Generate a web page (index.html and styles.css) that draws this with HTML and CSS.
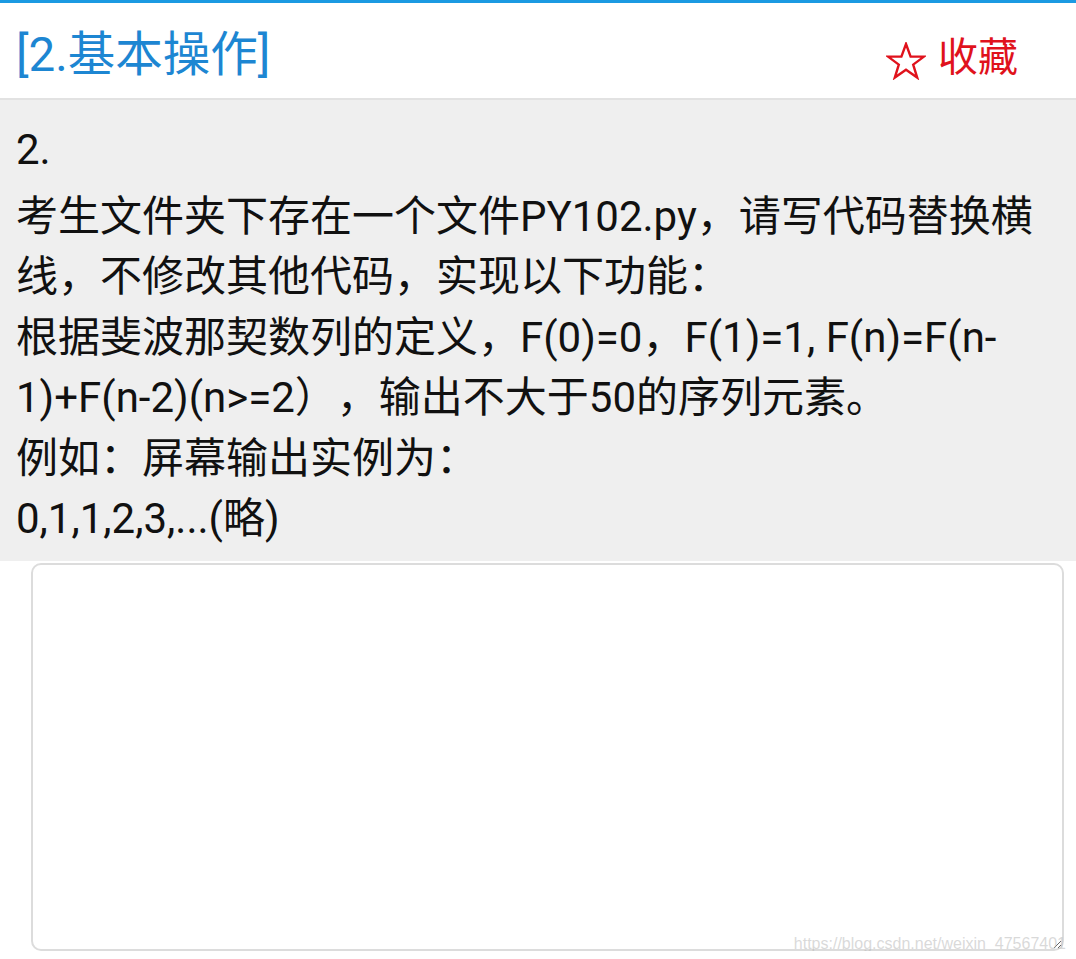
FILE: index.html
```html
<!DOCTYPE html>
<html lang="zh-CN">
<head>
    <meta charset="UTF-8">
    <meta name="viewport" content="width=device-width, initial-scale=1">
    <title>2.基本操作</title>
    <link rel="stylesheet" href="styles.css">
</head>
<body>
<header class="topbar">
    <h1 class="title">[2.基本操作]</h1>
    <span class="fav">
        <svg class="star" viewBox="0 0 40 38" width="40" height="38">
            <polygon points="20,2 24.6,14.6 38,14.6 27.2,22.6 31.2,35.6 20,27.8 8.8,35.6 12.8,22.6 2,14.6 15.4,14.6"
                     fill="none" stroke="#e0121c" stroke-width="2.4" stroke-linejoin="miter"/>
        </svg>
        收藏
    </span>
</header>
<section class="question">
    <div class="num">2.</div>
    <div class="body">
        考生文件夹下存在一个文件PY102.py，请写代码替换横<br>
        线，不修改其他代码，实现以下功能：<br>
        根据斐波那契数列的定义，F(0)=0，F(1)=1, F(n)=F(n-<br>
        1)+F(n-2)(n&gt;=2），输出不大于50的序列元素。<br>
        例如：屏幕输出实例为：<br>
        0,1,1,2,3,...(略)
    </div>
</section>
<div class="answer">
    <textarea class="code"></textarea>
    <span class="mark">https://blog.csdn.net/weixin_47567401</span>
</div>
</body>
</html>
```

FILE: styles.css
```css
* {
    margin: 0;
    padding: 0;
    box-sizing: border-box;
}

body {
    font-family: Roboto, "Noto Sans CJK SC", sans-serif;
    background: #fff;
    color: #111;
    border-top: 3px solid #1b9ae2;
    text-spacing-trim: space-all;
}

.topbar {
    height: 97px;
    display: flex;
    align-items: center;
    justify-content: space-between;
    padding: 14px 58px 0 16px;
    border-bottom: 2px solid #e2e2e2;
}

.title {
    font-size: 47.5px;
    font-weight: normal;
    color: #1d86d2;
    line-height: 1;
    margin-top: -4px;
}

.fav {
    display: flex;
    align-items: center;
    gap: 12px;
    color: #e0121c;
    font-size: 40px;
    line-height: 1;
}

.star {
    margin-top: 6px;
}

.question {
    background: #efefef;
    padding: 20px 16px 10px;
    height: 461px;
    font-size: 42px;
    line-height: 60.5px;
}

.num {
    margin-bottom: 6px;
}

.answer {
    position: relative;
    padding: 2px 12px 0 31px;
}

.code {
    display: block;
    width: 100%;
    height: 388px;
    border: 2px solid #dcdcdc;
    border-radius: 10px;
    background: #fff;
    outline: none;
}

.mark {
    position: absolute;
    right: 10px;
    top: 374px;
    font-family: "Liberation Sans", sans-serif;
    font-size: 16px;
    color: rgba(180, 180, 180, .5);
    pointer-events: none;
}
```
